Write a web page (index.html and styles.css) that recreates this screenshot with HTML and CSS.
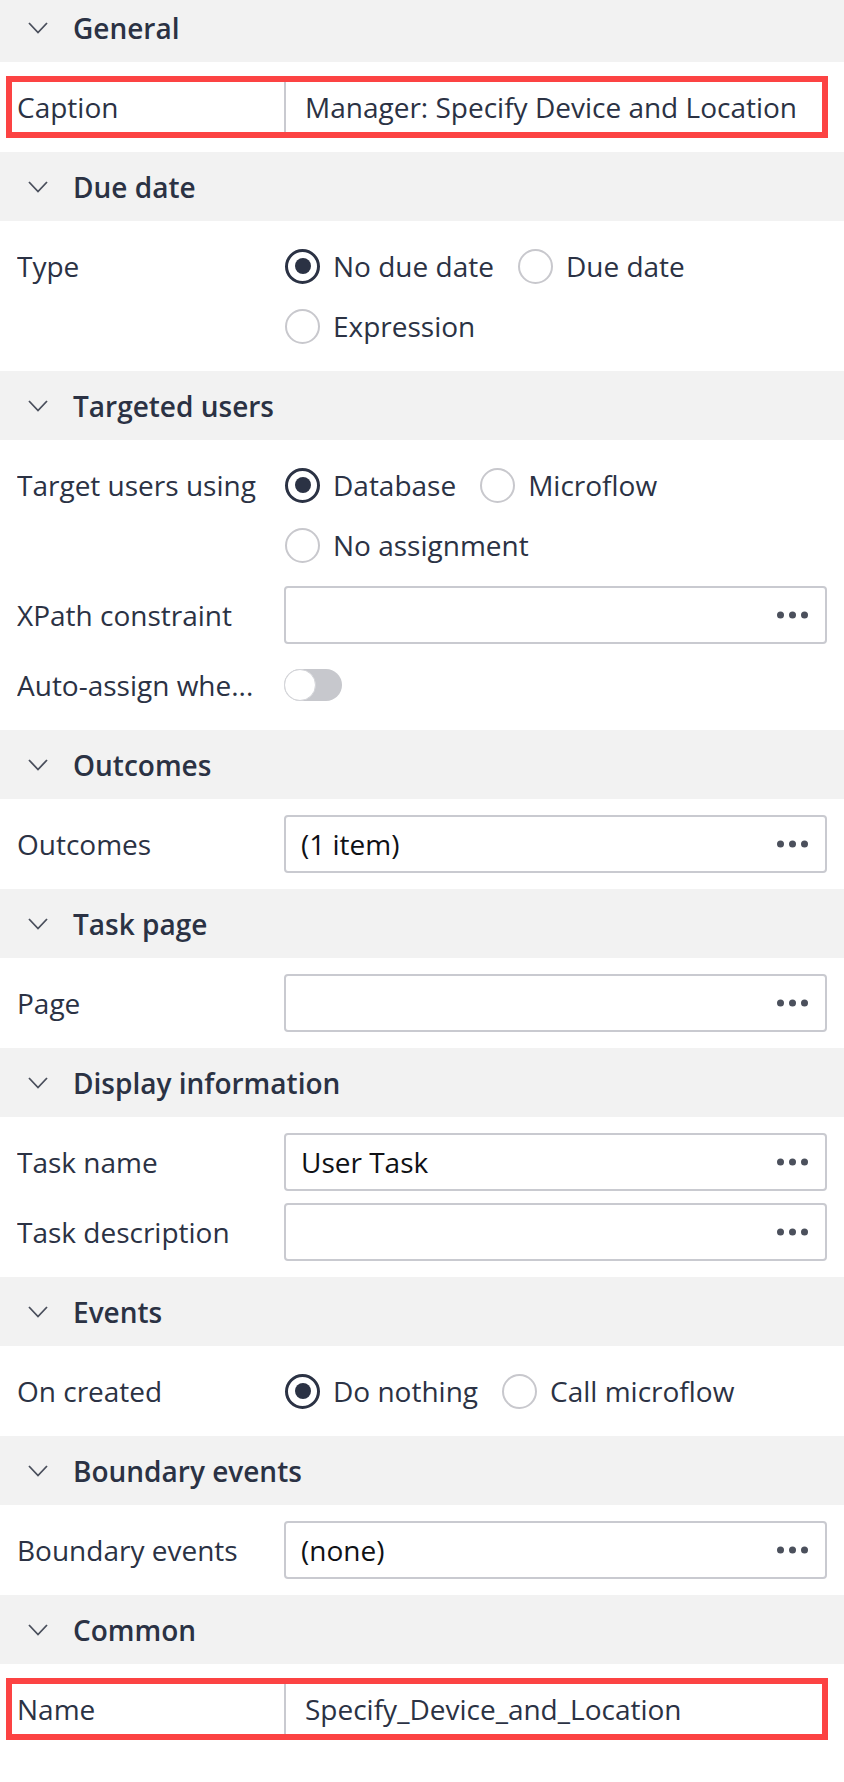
FILE: index.html
```html
<!DOCTYPE html>
<html lang="en">
<head>
<meta charset="utf-8">
<title>Properties</title>
<link rel="stylesheet" href="styles.css">
</head>
<body>
<div class="panel">

  <section class="group">
    <div class="group-header"><svg class="chevron" viewBox="0 0 20 12"><polyline points="1,1 10,10.5 19,1"/></svg><span>General</span></div>
    <div class="group-body">
      <div class="prop prop--marked">
        <div class="prop-label">Caption</div>
        <div class="field field--text">Manager: Specify Device and Location</div>
      </div>
    </div>
  </section>

  <section class="group">
    <div class="group-header"><svg class="chevron" viewBox="0 0 20 12"><polyline points="1,1 10,10.5 19,1"/></svg><span>Due date</span></div>
    <div class="group-body">
      <div class="prop prop--radios">
        <div class="prop-label">Type</div>
        <div class="radios">
          <span class="radio radio--on"><span class="radio-mark"></span>No due date</span>
          <span class="radio"><span class="radio-mark"></span>Due date</span>
          <span class="radio"><span class="radio-mark"></span>Expression</span>
        </div>
      </div>
    </div>
  </section>

  <section class="group">
    <div class="group-header"><svg class="chevron" viewBox="0 0 20 12"><polyline points="1,1 10,10.5 19,1"/></svg><span>Targeted users</span></div>
    <div class="group-body">
      <div class="prop prop--radios">
        <div class="prop-label">Target users using</div>
        <div class="radios">
          <span class="radio radio--on"><span class="radio-mark"></span>Database</span>
          <span class="radio"><span class="radio-mark"></span>Microflow</span>
          <span class="radio"><span class="radio-mark"></span>No assignment</span>
        </div>
      </div>
      <div class="prop">
        <div class="prop-label">XPath constraint</div>
        <div class="field"><span class="field-value"></span><svg class="dots" viewBox="0 0 31 8"><circle cx="3.5" cy="4" r="3.5"/><circle cx="15.5" cy="4" r="3.5"/><circle cx="27.5" cy="4" r="3.5"/></svg></div>
      </div>
      <div class="prop">
        <div class="prop-label">Auto-assign whe...</div>
        <div class="toggle"><span class="toggle-knob"></span></div>
      </div>
    </div>
  </section>

  <section class="group">
    <div class="group-header"><svg class="chevron" viewBox="0 0 20 12"><polyline points="1,1 10,10.5 19,1"/></svg><span>Outcomes</span></div>
    <div class="group-body">
      <div class="prop">
        <div class="prop-label">Outcomes</div>
        <div class="field"><span class="field-value">(1 item)</span><svg class="dots" viewBox="0 0 31 8"><circle cx="3.5" cy="4" r="3.5"/><circle cx="15.5" cy="4" r="3.5"/><circle cx="27.5" cy="4" r="3.5"/></svg></div>
      </div>
    </div>
  </section>

  <section class="group">
    <div class="group-header"><svg class="chevron" viewBox="0 0 20 12"><polyline points="1,1 10,10.5 19,1"/></svg><span>Task page</span></div>
    <div class="group-body">
      <div class="prop">
        <div class="prop-label">Page</div>
        <div class="field"><span class="field-value"></span><svg class="dots" viewBox="0 0 31 8"><circle cx="3.5" cy="4" r="3.5"/><circle cx="15.5" cy="4" r="3.5"/><circle cx="27.5" cy="4" r="3.5"/></svg></div>
      </div>
    </div>
  </section>

  <section class="group">
    <div class="group-header"><svg class="chevron" viewBox="0 0 20 12"><polyline points="1,1 10,10.5 19,1"/></svg><span>Display information</span></div>
    <div class="group-body">
      <div class="prop">
        <div class="prop-label">Task name</div>
        <div class="field"><span class="field-value">User Task</span><svg class="dots" viewBox="0 0 31 8"><circle cx="3.5" cy="4" r="3.5"/><circle cx="15.5" cy="4" r="3.5"/><circle cx="27.5" cy="4" r="3.5"/></svg></div>
      </div>
      <div class="prop">
        <div class="prop-label">Task description</div>
        <div class="field"><span class="field-value"></span><svg class="dots" viewBox="0 0 31 8"><circle cx="3.5" cy="4" r="3.5"/><circle cx="15.5" cy="4" r="3.5"/><circle cx="27.5" cy="4" r="3.5"/></svg></div>
      </div>
    </div>
  </section>

  <section class="group">
    <div class="group-header"><svg class="chevron" viewBox="0 0 20 12"><polyline points="1,1 10,10.5 19,1"/></svg><span>Events</span></div>
    <div class="group-body">
      <div class="prop prop--radios">
        <div class="prop-label">On created</div>
        <div class="radios">
          <span class="radio radio--on"><span class="radio-mark"></span>Do nothing</span>
          <span class="radio"><span class="radio-mark"></span>Call microflow</span>
        </div>
      </div>
    </div>
  </section>

  <section class="group">
    <div class="group-header"><svg class="chevron" viewBox="0 0 20 12"><polyline points="1,1 10,10.5 19,1"/></svg><span>Boundary events</span></div>
    <div class="group-body">
      <div class="prop">
        <div class="prop-label">Boundary events</div>
        <div class="field"><span class="field-value">(none)</span><svg class="dots" viewBox="0 0 31 8"><circle cx="3.5" cy="4" r="3.5"/><circle cx="15.5" cy="4" r="3.5"/><circle cx="27.5" cy="4" r="3.5"/></svg></div>
      </div>
    </div>
  </section>

  <section class="group">
    <div class="group-header"><svg class="chevron" viewBox="0 0 20 12"><polyline points="1,1 10,10.5 19,1"/></svg><span>Common</span></div>
    <div class="group-body">
      <div class="prop prop--marked">
        <div class="prop-label">Name</div>
        <div class="field field--text">Specify_Device_and_Location</div>
      </div>
    </div>
  </section>

</div>
</body>
</html>
```

FILE: styles.css
```css
html, body {
  margin: 0;
  padding: 0;
  background: #ffffff;
}

body {
  font-family: "Open Sans", "Noto Sans", sans-serif;
  font-size: 28px;
  color: #2b3244;
  width: 844px;
  overflow: hidden;
}

.panel {
  margin-top: -7px;
}

.group-header {
  height: 69px;
  background: #f2f2f2;
  display: flex;
  align-items: center;
  padding-left: 28px;
  gap: 25px;
  font-weight: 600;
}

.chevron {
  width: 20px;
  height: 12px;
  fill: none;
  stroke: #4a4f5c;
  stroke-width: 1.8;
  flex: none;
}

.group-body {
  padding: 16px 17px;
  display: flex;
  flex-direction: column;
  gap: 12px;
}

.prop {
  display: grid;
  grid-template-columns: 267px 1fr;
  align-items: center;
  min-height: 58px;
}

.prop--radios {
  align-items: start;
}

.prop-label {
  white-space: nowrap;
  overflow: hidden;
  line-height: 58px;
  padding-right: 8px;
}

.field {
  height: 58px;
  box-sizing: border-box;
  border: 2px solid #c9cad0;
  border-radius: 4px;
  display: flex;
  align-items: center;
  justify-content: space-between;
  padding: 0 17px 0 15px;
  color: #0f1115;
  white-space: nowrap;
}

.field--text {
  padding-left: 19px;
  color: #2b3244;
}

.dots {
  width: 31px;
  height: 8px;
  fill: #4b505c;
  flex: none;
}

.prop--marked {
  position: relative;
}

.prop--marked::after {
  content: "";
  position: absolute;
  left: -11px;
  right: -1px;
  top: -2px;
  bottom: -2px;
  border: 6px solid #fc4343;
  pointer-events: none;
}

.radios {
  display: flex;
  flex-wrap: wrap;
  column-gap: 24px;
  row-gap: 2px;
  padding-left: 1px;
}

.radio {
  display: inline-flex;
  align-items: center;
  gap: 13px;
  height: 58px;
  white-space: nowrap;
}

.radio-mark {
  width: 35px;
  height: 35px;
  box-sizing: border-box;
  border-radius: 50%;
  border: 2.5px solid #c8c8cd;
  display: flex;
  align-items: center;
  justify-content: center;
  flex: none;
}

.radio--on .radio-mark {
  border: 3px solid #2b3244;
}

.radio--on .radio-mark::after {
  content: "";
  width: 16px;
  height: 16px;
  border-radius: 50%;
  background: #2b3244;
}

.toggle {
  width: 58px;
  height: 32px;
  border-radius: 16px;
  background: #c7c8cd;
  display: flex;
  align-items: center;
}

.toggle-knob {
  width: 32px;
  height: 32px;
  box-sizing: border-box;
  border-radius: 50%;
  background: #ffffff;
  border: 1.5px solid #d3d4d8;
}
```
